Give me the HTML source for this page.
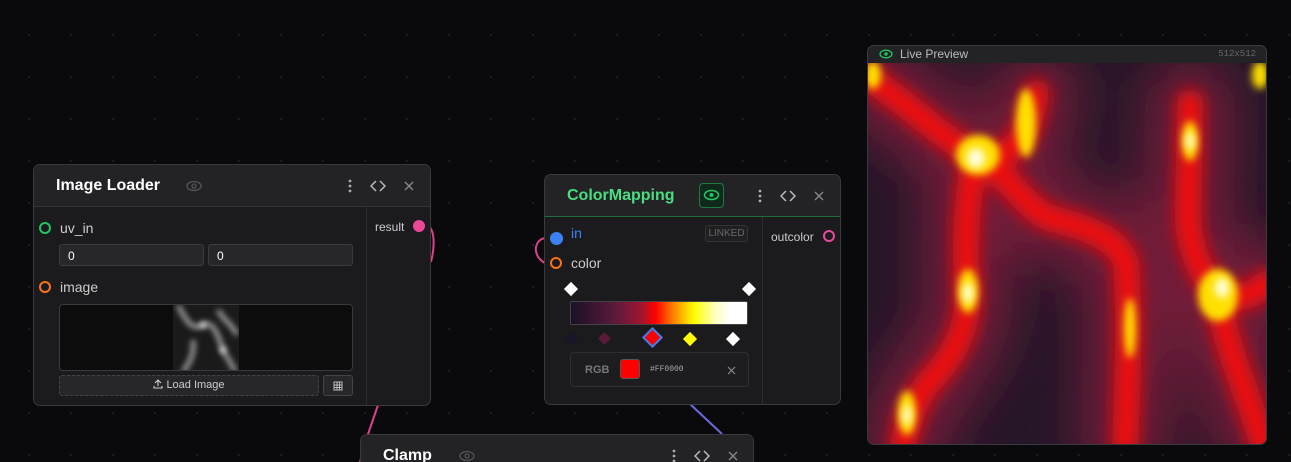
<!DOCTYPE html>
<html><head><style>
*{box-sizing:border-box;margin:0;padding:0}
html{width:1291px;height:462px;overflow:hidden}
body{width:1291px;height:462px;overflow:hidden;background:#0a0a0c;background-image:radial-gradient(circle,#1e1e22 1px,transparent 1.3px);background-size:42px 42px;background-position:8px 14px;font-family:"Liberation Sans",sans-serif;position:relative;color:#ddd}
.node{position:absolute;background:#1b1b1e;border:1px solid #3a3a3e;border-radius:7px;overflow:hidden}
.hdr{position:absolute;left:0;right:0;top:0;background:#232326;border-bottom:1px solid #333}
.t{position:absolute;font-weight:bold;font-size:16px;color:#fff}
.abs{position:absolute}
.ring{position:absolute;width:12px;height:12px;border-radius:50%;border:2px solid}
.lbl{position:absolute;font-size:14px;color:#ccc}
.inp{position:absolute;background:#27272a;border:1px solid #3a3a3e;border-radius:3px;font-size:12px;color:#fff;padding:4px 8px}
.dia{position:absolute;transform:rotate(45deg)}
</style></head><body>
<svg class="abs" style="left:0;top:0" width="1291" height="462">
<path d="M428 225 C436 232 434 250 431 262" stroke="#e0408a" stroke-width="2" fill="none"/>
<path d="M378 405 L366 440 L360 462" stroke="#e0408a" stroke-width="2" fill="none"/>
<path d="M545 238 C533 240 532 258 547 264" stroke="#e0408a" stroke-width="2" fill="none"/>
<path d="M690 404 L722 434" stroke="#6a6ae0" stroke-width="2" fill="none"/>
</svg>

<!-- Image Loader -->
<div class="node" style="left:33px;top:164px;width:398px;height:242px">
 <div class="hdr" style="height:42px"></div>
 <div class="t" style="left:22px;top:12px">Image Loader</div>
 <svg class="abs" style="left:152px;top:15px" width="16" height="12"><ellipse cx="8" cy="6" rx="7" ry="4.5" fill="none" stroke="#555" stroke-width="1.3"/><circle cx="8" cy="6" r="2" fill="none" stroke="#555" stroke-width="1.3"/></svg>
 <svg class="abs" style="left:314px;top:14px" width="4" height="14"><circle cx="2" cy="2" r="1.4" fill="#aaa"/><circle cx="2" cy="7" r="1.4" fill="#aaa"/><circle cx="2" cy="12" r="1.4" fill="#aaa"/></svg>
 <svg class="abs" style="left:336px;top:15px" width="16" height="12"><path d="M6 1 L1 6 L6 11 M10 1 L15 6 L10 11" stroke="#bbb" stroke-width="1.5" fill="none"/></svg>
 <svg class="abs" style="left:370px;top:16px" width="10" height="10"><path d="M1 1 L9 9 M9 1 L1 9" stroke="#888" stroke-width="1.4"/></svg>
 <div class="abs" style="left:332px;top:42px;width:1px;height:200px;background:#2e2e32"></div>
 <div class="ring" style="left:5px;top:57px;border-color:#22c55e"></div>
 <div class="lbl" style="left:26px;top:55px">uv_in</div>
 <div class="inp" style="left:25px;top:79px;width:145px;height:22px">0</div>
 <div class="inp" style="left:174px;top:79px;width:145px;height:22px">0</div>
 <div class="ring" style="left:5px;top:116px;border-color:#f97316"></div>
 <div class="lbl" style="left:26px;top:114px">image</div>
 <div class="abs" style="left:25px;top:139px;width:294px;height:67px;background:#0c0c0c;border:1px solid #3a3a3e;border-radius:4px;overflow:hidden">
  <svg class="abs" style="left:113px;top:0" width="66" height="67"><defs><filter id="b1" x="-50%" y="-50%" width="200%" height="200%"><feGaussianBlur stdDeviation="3"/></filter></defs><rect width="66" height="67" fill="#1a1a1a"/><g filter="url(#b1)" stroke="#999" fill="none" stroke-width="5"><path d="M5 0 C15 20 20 25 30 20 C40 15 45 30 50 45 C55 55 60 60 62 67"/><path d="M20 35 C22 50 15 60 10 67"/><path d="M45 5 C50 15 60 20 64 30"/></g><g fill="#eee" filter="url(#b1)"><circle cx="30" cy="20" r="3"/><circle cx="50" cy="45" r="3"/></g></svg>
 </div>
 <div class="abs" style="left:25px;top:210px;width:260px;height:21px;border:1px dashed #444;background:#27272a;border-radius:3px;font-size:11px;color:#ccc;text-align:center;line-height:19px"><svg width="10" height="10" style="vertical-align:-1px;margin-right:3px"><path d="M5 7 V1 M2 4 L5 1 L8 4 M1 7 V9 H9 V7" stroke="#ccc" fill="none" stroke-width="1.1"/></svg>Load Image</div>
 <div class="abs" style="left:289px;top:210px;width:30px;height:21px;border:1px solid #444;background:#27272a;border-radius:3px"><svg class="abs" style="left:9px;top:5px" width="10" height="10"><path d="M1 1H9V9H1Z M1 4H9 M1 6.5H9 M4 1V9 M6.5 1V9" stroke="#bbb" fill="none" stroke-width="1"/></svg></div>
 <div class="abs" style="left:341px;top:55px;font-size:12px;color:#ccc">result</div>
 <div class="abs" style="left:379px;top:55px;width:12px;height:12px;border-radius:50%;background:#ec4899"></div>
</div>

<!-- ColorMapping -->
<div class="node" style="left:544px;top:174px;width:297px;height:231px">
 <div class="hdr" style="height:42px;border-bottom-color:#1f6b3a"></div>
 <div class="t" style="left:22px;top:12px;color:#4ade80">ColorMapping</div>
 <div class="abs" style="left:154px;top:8px;width:25px;height:25px;border:1px solid #1f7a40;background:#0f2a1a;border-radius:4px"></div>
 <svg class="abs" style="left:158px;top:14px" width="17" height="12"><ellipse cx="8.5" cy="6" rx="7" ry="4.5" fill="none" stroke="#22c55e" stroke-width="1.5"/><circle cx="8.5" cy="6" r="2" fill="#22c55e"/></svg>
 <svg class="abs" style="left:213px;top:14px" width="4" height="14"><circle cx="2" cy="2" r="1.4" fill="#aaa"/><circle cx="2" cy="7" r="1.4" fill="#aaa"/><circle cx="2" cy="12" r="1.4" fill="#aaa"/></svg>
 <svg class="abs" style="left:235px;top:15px" width="16" height="12"><path d="M6 1 L1 6 L6 11 M10 1 L15 6 L10 11" stroke="#bbb" stroke-width="1.5" fill="none"/></svg>
 <svg class="abs" style="left:269px;top:16px" width="10" height="10"><path d="M1 1 L9 9 M9 1 L1 9" stroke="#888" stroke-width="1.4"/></svg>
 <div class="abs" style="left:217px;top:42px;width:1px;height:189px;background:#2e2e32"></div>
 <div class="abs" style="left:5px;top:57px;width:13px;height:13px;border-radius:50%;background:#3b82f6"></div>
 <div class="lbl" style="left:26px;top:50px;color:#3b82f6">in</div>
 <div class="abs" style="left:160px;top:50px;width:43px;height:17px;border:1px solid #333;border-radius:3px;background:#202022;font-size:10px;color:#666;text-align:center;line-height:15px">LINKED</div>
 <div class="ring" style="left:5px;top:82px;border-color:#f97316"></div>
 <div class="lbl" style="left:26px;top:80px">color</div>
 <div class="dia" style="left:21px;top:109px;width:10px;height:10px;background:#fff"></div>
 <div class="dia" style="left:199px;top:109px;width:10px;height:10px;background:#fff"></div>
 <div class="abs" style="left:25px;top:126px;width:178px;height:24px;border:1px solid #444;border-radius:2px;background:linear-gradient(90deg,#1a1028 0%,#5a1a3a 25%,#a01530 40%,#ff0000 48%,#ff8000 58%,#ffff00 70%,#ffffc0 82%,#fff 90%)"></div>
 <div class="dia" style="left:22px;top:159px;width:9px;height:9px;background:#161628"></div>
 <div class="dia" style="left:55px;top:159px;width:9px;height:9px;background:#5a1a3a"></div>
 <div class="dia" style="left:100px;top:155px;width:15px;height:15px;background:#f00;border:2px solid #3b82f6;outline:1px solid #1b1b1e"></div>
 <div class="dia" style="left:140px;top:159px;width:10px;height:10px;background:#ff0"></div>
 <div class="dia" style="left:183px;top:159px;width:10px;height:10px;background:#fff"></div>
 <div class="abs" style="left:25px;top:177px;width:179px;height:35px;border:1px solid #2e2e32;border-radius:4px;background:#1d1d20"></div>
 <div class="abs" style="left:40px;top:189px;font-size:11px;font-weight:bold;color:#777">RGB</div>
 <div class="abs" style="left:75px;top:184px;width:20px;height:20px;background:#f00;border:1px solid #555;border-radius:3px"></div>
 <div class="abs" style="left:105px;top:190px;font-family:'Liberation Mono',monospace;font-size:8px;color:#aaa">#FF0000</div>
 <svg class="abs" style="left:182px;top:191px" width="9" height="9"><path d="M1 1 L8 8 M8 1 L1 8" stroke="#888" stroke-width="1.2"/></svg>
 <div class="abs" style="left:226px;top:55px;font-size:12px;color:#ccc">outcolor</div>
 <div class="ring" style="left:278px;top:55px;border-color:#ec4899"></div>
</div>

<!-- Clamp -->
<div class="node" style="left:360px;top:434px;width:394px;height:40px;border-bottom:none">
 <div class="hdr" style="height:42px"></div>
 <div class="t" style="left:22px;top:12px">Clamp</div>
 <svg class="abs" style="left:98px;top:15px" width="16" height="12"><ellipse cx="8" cy="6" rx="7" ry="4.5" fill="none" stroke="#555" stroke-width="1.3"/><circle cx="8" cy="6" r="2" fill="none" stroke="#555" stroke-width="1.3"/></svg>
 <svg class="abs" style="left:311px;top:14px" width="4" height="14"><circle cx="2" cy="2" r="1.4" fill="#aaa"/><circle cx="2" cy="7" r="1.4" fill="#aaa"/><circle cx="2" cy="12" r="1.4" fill="#aaa"/></svg>
 <svg class="abs" style="left:333px;top:15px" width="16" height="12"><path d="M6 1 L1 6 L6 11 M10 1 L15 6 L10 11" stroke="#bbb" stroke-width="1.5" fill="none"/></svg>
 <svg class="abs" style="left:367px;top:16px" width="10" height="10"><path d="M1 1 L9 9 M9 1 L1 9" stroke="#888" stroke-width="1.4"/></svg>
</div>

<!-- Live Preview -->
<div class="node" style="left:867px;top:45px;width:400px;height:400px;border-color:#3a3a3e;background:#232326">
 <svg class="abs" style="left:11px;top:3px" width="14" height="10"><ellipse cx="7" cy="5" rx="6" ry="3.8" fill="none" stroke="#22c55e" stroke-width="1.3"/><circle cx="7" cy="5" r="1.7" fill="#22c55e"/></svg>
 <div class="abs" style="left:32px;top:1px;font-size:12px;color:#bbb">Live Preview</div>
 <div class="abs" style="right:10px;top:3px;font-family:'Liberation Mono',monospace;font-size:9px;color:#666">512x512</div>
 <svg class="abs" style="left:0;top:17px" width="398" height="381">
  <defs>
   <filter id="bb" x="-50%" y="-50%" width="200%" height="200%"><feGaussianBlur stdDeviation="25"/></filter>
   <filter id="bm" x="-50%" y="-50%" width="200%" height="200%"><feGaussianBlur stdDeviation="8"/></filter>
   <filter id="bs" x="-50%" y="-50%" width="200%" height="200%"><feGaussianBlur stdDeviation="4"/></filter>
  </defs>
  <rect width="398" height="381" fill="#251728"/>
  <g filter="url(#bb)" stroke="#7a1c3a" fill="none" stroke-width="90" stroke-linecap="round" opacity="0.9">
   <path d="M0 15 C40 40 80 80 107 92 C140 100 160 80 168 30"/>
   <path d="M107 92 C100 130 95 180 100 230 C100 260 90 290 60 320 C45 340 40 360 35 381"/>
   <path d="M107 92 C140 110 160 150 185 156 C220 165 250 175 258 200 C262 250 260 320 257 381"/>
   <path d="M322 40 C322 80 320 120 320 160 C325 200 340 220 350 229 C370 240 390 230 398 220"/>
   <path d="M350 229 C355 280 380 330 395 381"/>
  </g>
  <g filter="url(#bm)" stroke="#f01010" fill="none" stroke-width="26" stroke-linecap="round">
   <path d="M0 15 C40 40 80 80 107 92 C140 100 160 80 168 30"/>
   <path d="M107 92 C100 130 95 180 100 230 C100 260 90 290 60 320 C45 340 40 360 35 381"/>
   <path d="M107 92 C140 110 160 150 185 156 C220 165 250 175 258 200 C262 250 260 320 257 381"/>
   <path d="M322 40 C322 80 320 120 320 160 C325 200 340 220 350 229 C370 240 390 230 398 220"/>
   <path d="M350 229 C355 280 380 330 395 381"/>
  </g>
  <g filter="url(#bs)" fill="#ffe000">
   <ellipse cx="110" cy="92" rx="22" ry="20"/>
   <ellipse cx="158" cy="60" rx="10" ry="34"/>
   <ellipse cx="100" cy="228" rx="10" ry="22"/>
   <ellipse cx="322" cy="78" rx="8" ry="20"/>
   <ellipse cx="350" cy="232" rx="20" ry="26"/>
   <ellipse cx="39" cy="350" rx="9" ry="22"/>
   <ellipse cx="262" cy="265" rx="6" ry="30"/>
   <ellipse cx="5" cy="12" rx="8" ry="14"/>
   <ellipse cx="392" cy="12" rx="8" ry="14"/>
  </g>
  <g filter="url(#bs)" fill="#ffffe0">
   <ellipse cx="108" cy="95" rx="9" ry="10"/>
   <ellipse cx="100" cy="230" rx="5" ry="10"/>
   <ellipse cx="322" cy="78" rx="4" ry="9"/>
   <ellipse cx="354" cy="225" rx="7" ry="10"/>
   <ellipse cx="39" cy="352" rx="4" ry="10"/>
  </g>
 </svg>
</div>
</body></html>
